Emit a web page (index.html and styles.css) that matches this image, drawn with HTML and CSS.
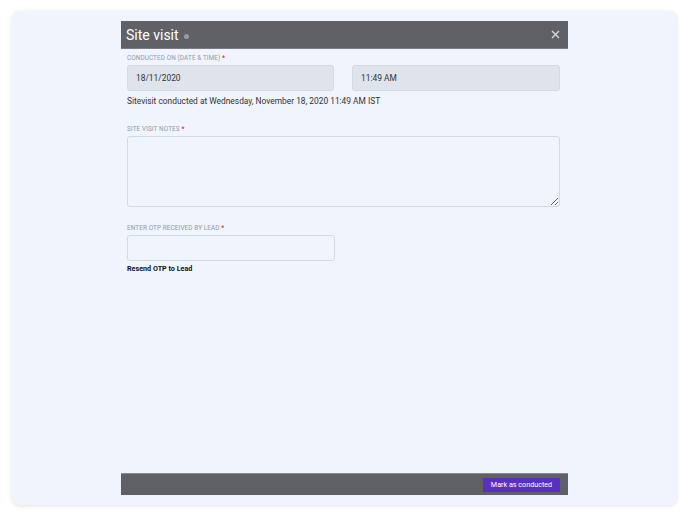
FILE: index.html
```html
<!DOCTYPE html>
<html>
  <head>
    <meta charset="utf-8">
    <title>Site visit</title>
    <link rel="stylesheet" href="styles.css">
  </head>
  <body>
    <div class="frame">
      <div class="modal">
        <header class="head">
          <h1>Site visit <span class="info"></span></h1>
          <svg class="close" width="9" height="9" viewBox="0 0 9 9"><path d="M1 1L8 8M8 1L1 8" stroke="#d8d8dc" stroke-width="1.4"/></svg>
        </header>
        <div class="body">
          <label class="label">Conducted on (date &amp; time) <b>*</b></label>
          <div class="pair">
            <div class="field filled">18/11/2020</div>
            <div class="field filled">11:49 AM</div>
          </div>
          <p class="note">Sitevisit conducted at Wednesday, November 18, 2020 11:49 AM IST</p>

          <label class="label">Site visit notes <b>*</b></label>
          <textarea class="notes"></textarea>

          <label class="label">Enter OTP received by lead <b>*</b></label>
          <div class="field otp"></div>
          <a class="resend">Resend OTP to Lead</a>
        </div>
        <footer class="foot">
          <button class="primary">Mark as conducted</button>
        </footer>
      </div>
    </div>
  </body>
</html>
```

FILE: styles.css
```css
* {
  box-sizing: border-box;
  font-family: Roboto, "Liberation Sans", sans-serif;
}
body {
  margin: 0;
  background: #fff;
  padding: 11px 12px;
}
.frame {
  height: 494px;
  border-radius: 8px;
  background: #eff4fd;
  box-shadow: 0 1px 4px rgba(0, 0, 0, .12);
  padding: 10px 0 10px 109px;
}
.modal {
  width: 447px;
  height: 100%;
  display: flex;
  flex-direction: column;
}
.head {
  height: 28px;
  background: #606166;
  border-bottom: 1px solid #7b7c82;
  display: flex;
  align-items: center;
  justify-content: space-between;
  padding: 0 8px 0 5px;
}
.head h1 {
  margin: 0;
  color: #fff;
  font-size: 14px;
  font-weight: 400;
  display: flex;
  align-items: center;
  gap: 5px;
}
.info {
  width: 5px;
  height: 5px;
  border-radius: 50%;
  background: #9a9ba0;
  margin-top: 3px;
}
.body {
  flex: 1;
  padding: 5px 8px 0 6px;
  display: flex;
  flex-direction: column;
  align-items: flex-start;
}
.label {
  font-size: 6.4px;
  color: #9599a3;
  text-transform: uppercase;
  letter-spacing: .1px;
  margin-bottom: 3px;
}
.label b {
  color: #e53935;
  font-weight: 700;
}
.pair {
  width: 100%;
  display: grid;
  grid-template-columns: 207px 208px;
  gap: 18px;
}
.field {
  height: 26px;
  border: 1px solid #d4d8e1;
  border-radius: 3px;
  padding: 0 8px;
  display: flex;
  align-items: center;
  font-size: 8.4px;
  color: #333;
}
.filled { background: #dfe3ec; }
.note {
  margin: 5px 0 19px;
  font-size: 8.4px;
  color: #333;
}
.notes {
  width: 100%;
  height: 71px;
  border: 1px solid #d4d8e1;
  border-radius: 3px;
  background: transparent;
  margin: 0 0 17px;
}
.otp {
  width: 208px;
}
.resend {
  margin-top: 3px;
  font-size: 7.2px;
  font-weight: 700;
  color: #111;
}
.foot {
  height: 22px;
  background: #606166;
  border-top: 1px solid #8a8b90;
  display: flex;
  align-items: center;
  justify-content: flex-end;
  padding: 0 8px;
}
.primary {
  height: 14px;
  width: 77px;
  border: 0;
  background: #5a31bd;
  color: #fff;
  font-size: 7.2px;
  padding: 0;
}
```
